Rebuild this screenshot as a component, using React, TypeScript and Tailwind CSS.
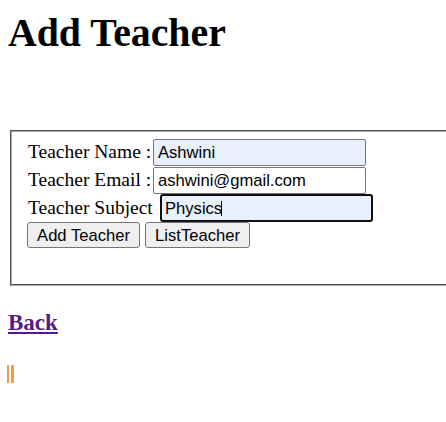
import React from "react";

const serif = { fontFamily: '"Liberation Serif", "Times New Roman", serif' };

export default function App() {
  const sans = "font-['Liberation_Sans',Arial,sans-serif]";
  return (
    <div className="relative w-[446px] h-[422px] overflow-hidden bg-white text-black font-['Liberation_Serif','Times_New_Roman',serif]">
      <h1 className="ml-[8px] mt-[11px] text-[39.8px] font-bold leading-[44px]">Add Teacher</h1>

      <div className="mt-[75px] ml-[10px] w-[520px] border-2 [border-style:groove] border-[#a8a8a8] pt-[7px] pl-[15px] pb-[36px] text-[19.5px]">
        <div className="flex items-baseline h-[28px]">
          <div className="w-[126px] pl-[1px] leading-[22px] whitespace-nowrap">Teacher Name :</div>
          <div className={`w-[213px] h-[27px] border border-[#767676] rounded-[2px] bg-[#e8f0fe] pl-[4px] flex items-center text-[16.6px] leading-[19px] ${sans}`}>
            Ashwini
          </div>
        </div>
        <div className="flex items-baseline h-[27px]">
          <div className="w-[126px] pl-[1px] leading-[22px] whitespace-nowrap">Teacher Email :</div>
          <div className={`w-[213px] h-[27px] border border-[#767676] rounded-[2px] bg-white pl-[4px] flex items-center text-[16.6px] leading-[19px] ${sans}`}>
            ashwini@gmail.com
          </div>
        </div>
        <div className="flex items-baseline h-[28px]">
          <div className="w-[133px] pl-[1px] leading-[22px] whitespace-nowrap">Teacher Subject</div>
          <div className={`w-[213px] h-[28px] border-2 border-[#101010] rounded-[3px] bg-[#e8f0fe] pl-[3px] flex items-center text-[16.6px] leading-[19px] ${sans}`}>
            Physics
            <span className="inline-block w-px h-[15px] bg-black ml-[-1px]" />
          </div>
        </div>
        <div className={`flex gap-[5px] h-[26px] ${sans}`}>
          <div className="w-[113px] h-[26px] border border-[#767676] rounded-[3px] bg-[#efefef] flex items-center justify-center text-[16.6px] leading-[19px]">
            Add Teacher
          </div>
          <div className="w-[105px] h-[26px] border border-[#767676] rounded-[3px] bg-[#efefef] flex items-center justify-center text-[16.6px] leading-[19px]">
            ListTeacher
          </div>
        </div>
      </div>

      <div className="mt-[24px] ml-[8px] leading-[26px] text-[23px] font-bold" style={serif}>
        <a href="#" className="text-[#551a8b] underline">Back</a>
      </div>

      <div className="mt-[29px] flex h-[18px]">
        <div className="ml-[7px] w-[2px] h-[18px] bg-[#e9a04a]" />
        <div className="ml-[2px] w-[2px] h-[18px] bg-[#e9a04a]" />
        <div className="w-[1px] h-[18px] bg-[#85bde6]" />
      </div>
    </div>
  );
}
